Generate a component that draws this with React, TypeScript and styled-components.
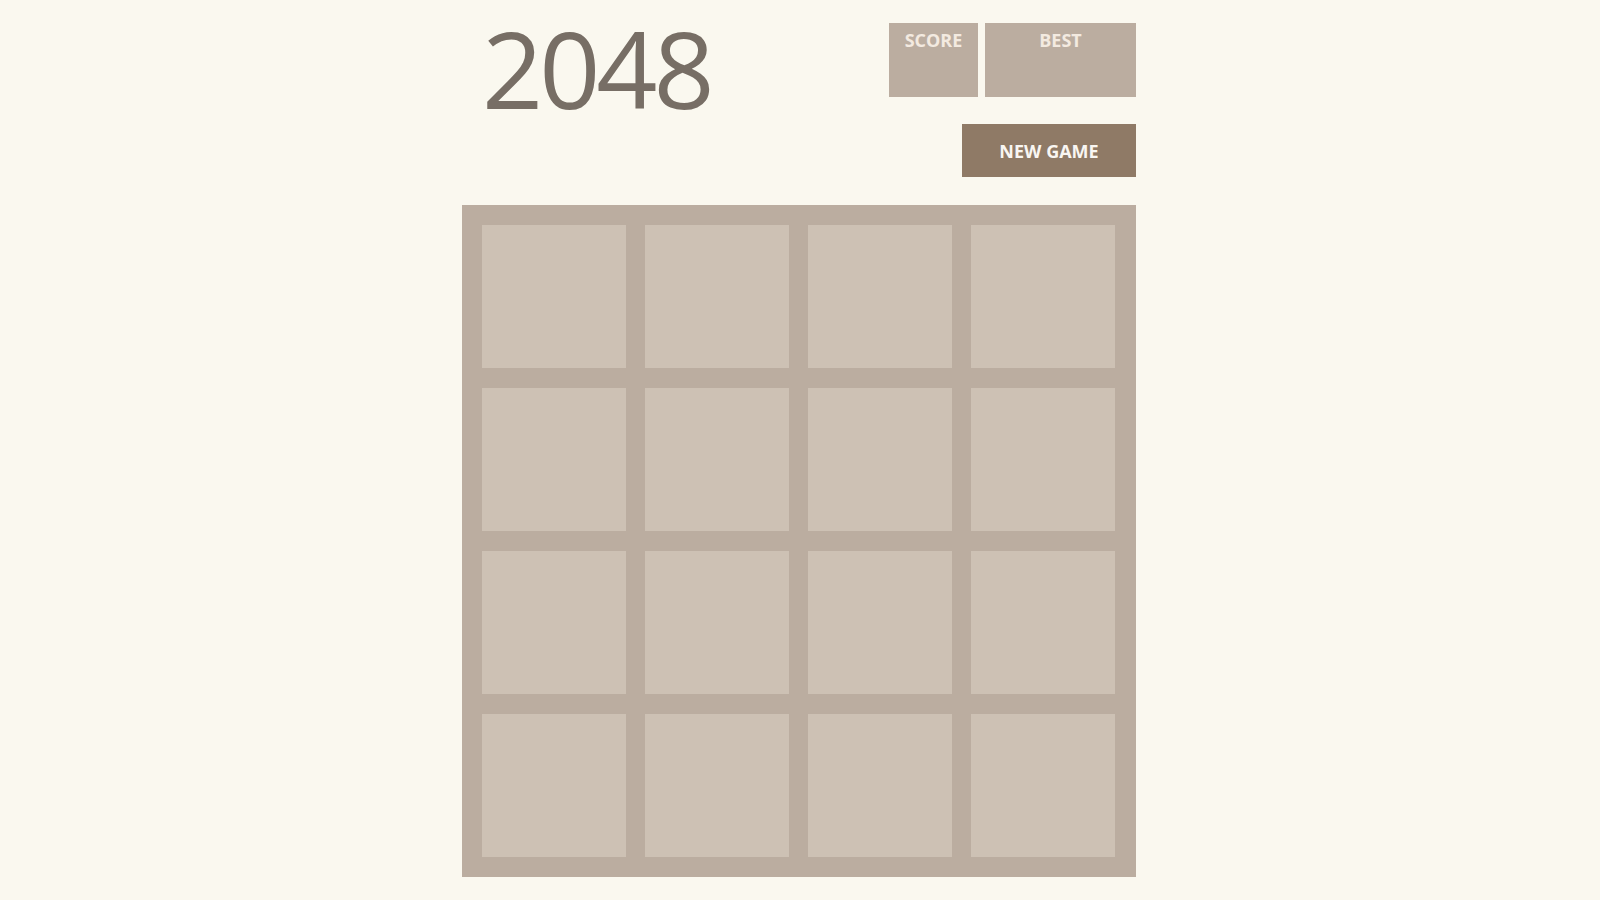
import styled, {createGlobalStyle} from "styled-components";

const GlobalStyle = createGlobalStyle`
  html, body {
    margin: 0;
    padding: 0;
    background: #faf8ef;
    font-family: "Open Sans", "DejaVu Sans", sans-serif;
  }
`;

const Container = styled.div`
  width: 674px;
  margin: 0 auto;
  padding: 4px 2px 0 0;
`;

const Header = styled.header`
  display: flex;
  justify-content: space-between;
  align-items: flex-start;
`;

const Title = styled.h1`
  margin: 0 0 0 20px;
  padding-right: 8px;
  font-size: 107px;
  line-height: 128px;
  font-weight: 400;
  letter-spacing: -4px;
  color: #776e65;
`;

const Side = styled.div`
  margin-top: 19px;
  display: flex;
  flex-direction: column;
  align-items: flex-end;
`;

const Scores = styled.div`
  display: flex;
  gap: 7px;
`;

const ScoreBox = styled.div<{ $width: number }>`
  width: ${(props) => props.$width}px;
  height: 74px;
  box-sizing: border-box;
  padding-top: 5px;
  background: #bbada0;
  color: #f3eae0;
  font-size: 18px;
  font-weight: 700;
  text-align: center;
`;

const NewGame = styled.button`
  margin-top: 27px;
  width: 174px;
  height: 53px;
  border: none;
  background: #8f7a66;
  color: #f9f6f2;
  font-family: inherit;
  font-size: 18px;
  font-weight: 700;
  cursor: pointer;
`;

const Board = styled.div`
  margin-top: 28px;
  box-sizing: border-box;
  width: 674px;
  padding: 20px 21px 20px 20px;
  background: #bbada0;
  display: grid;
  grid-template-columns: repeat(4, 144px);
  grid-auto-rows: 143px;
  column-gap: 19px;
  row-gap: 20px;
`;

const Cell = styled.div`
  background: #cdc1b4;
`;

const cells = Array.from({ length: 16 }, (_, i) => i);

function App() {
  return (
    <>
      <GlobalStyle />
      <Container>
        <Header>
          <Title>2048</Title>
          <Side>
            <Scores>
              <ScoreBox $width={89}>SCORE</ScoreBox>
              <ScoreBox $width={151}>BEST</ScoreBox>
            </Scores>
            <NewGame>NEW GAME</NewGame>
          </Side>
        </Header>
        <Board>
          {cells.map((c) => (
            <Cell key={c} />
          ))}
        </Board>
      </Container>
    </>
  );
}

export default App;
